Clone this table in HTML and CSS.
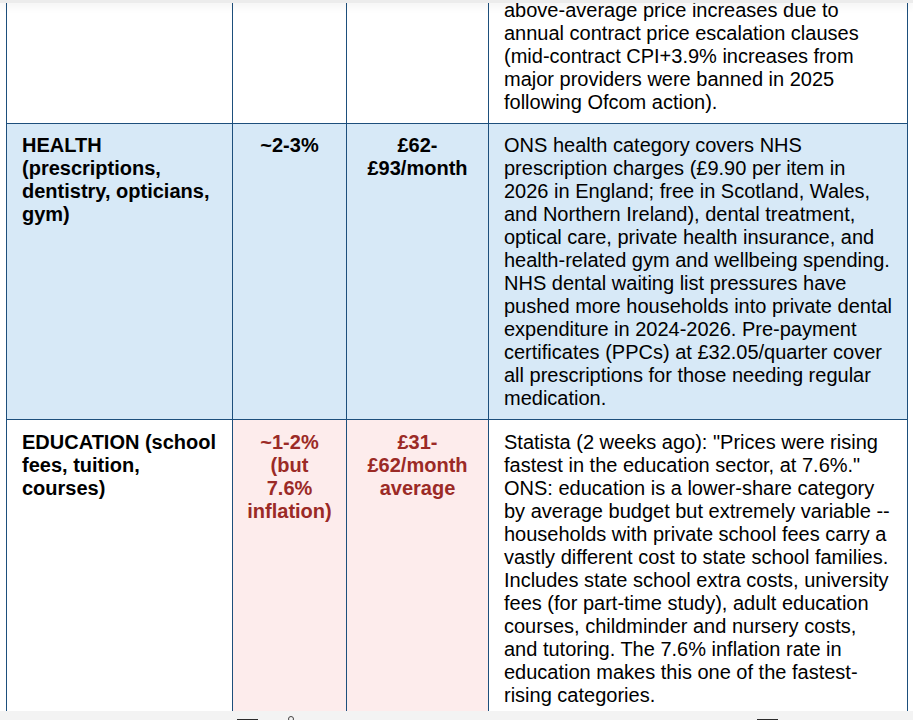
FILE: index.html
```html
<!DOCTYPE html>
<html lang="en">
<head>
<meta charset="utf-8">
<title>Household spending categories</title>
<link rel="stylesheet" href="styles.css">
</head>
<body>
<div class="topshade"></div>
<main class="doc">
  <table class="spend">
    <colgroup>
      <col class="c1"><col class="c2"><col class="c3"><col class="c4">
    </colgroup>
    <tbody>
      <tr class="row-first">
        <td class="cat"></td>
        <td class="num"></td>
        <td class="num"></td>
        <td class="desc">above-average price increases due to annual contract price escalation clauses (mid-contract CPI+3.9% increases from major providers were banned in 2025 following Ofcom action).</td>
      </tr>
      <tr class="row-blue">
        <td class="cat">HEALTH (prescriptions, dentistry, opticians, gym)</td>
        <td class="num">~2-3%</td>
        <td class="num">£62-<br>£93/month</td>
        <td class="desc">ONS health category covers NHS prescription charges (£9.90 per item in 2026 in England; free in Scotland, Wales, and Northern Ireland), dental treatment, optical care, private health insurance, and health-related gym and wellbeing spending. NHS dental waiting list pressures have pushed more households into private dental expenditure in 2024-2026. Pre-payment certificates (PPCs) at £32.05/quarter cover all prescriptions for those needing regular medication.</td>
      </tr>
      <tr class="row-last">
        <td class="cat">EDUCATION (school fees, tuition, courses)</td>
        <td class="num alert">~1-2%<br>(but<br>7.6%<br>inflation)</td>
        <td class="num alert">£31-<br>£62/month<br>average</td>
        <td class="desc">Statista (2 weeks ago): "Prices were rising fastest in the education sector, at 7.6%." ONS: education is a lower-share category by average budget but extremely variable -- households with private school fees carry a vastly different cost to state school families. Includes state school extra costs, university fees (for part-time study), adult education courses, childminder and nursery costs, and tutoring. The 7.6% inflation rate in education makes this one of the fastest-rising categories.</td>
      </tr>
    </tbody>
  </table>
</main>
<div class="toolbar">
  <span class="tb-icon tb-a"></span>
  <span class="tb-icon tb-b"></span>
  <span class="tb-icon tb-c"></span>
</div>
</body>
</html>
```
FILE: styles.css
```css
html, body {
  margin: 0;
  padding: 0;
  background: #ffffff;
}
body {
  height: 720px;
  overflow: hidden;
  font-family: "Liberation Sans", Arial, sans-serif;
  color: #000;
}
.doc {
  padding: 0 6px;
}
.spend {
  margin-top: -12px;
  width: 901px;
  table-layout: fixed;
  border-collapse: collapse;
  font-size: 20px;
  line-height: 23px;
}
.c1 { width: 226px; }
.c2 { width: 114px; }
.c3 { width: 142px; }
.c4 { width: 419px; }
.spend td {
  border: 1px solid #1d4f7c;
  vertical-align: top;
  padding: 10px 8px 9px 15px;
}
.spend .desc { padding-right: 13px; }
.row-blue td { background: #d7e9f7; }
.cat { font-weight: bold; }
.spend .num {
  font-weight: bold;
  text-align: center;
  padding-left: 4px;
  padding-right: 4px;
}
.spend .alert {
  background: #fdecec;
  color: #9b2a26;
}
.row-last td { padding-top: 11px; }
.topshade {
  position: fixed;
  top: 0;
  left: 0;
  right: 0;
  height: 3px;
  background: #ececec;
  box-shadow: 0 2px 8px rgba(0, 0, 0, 0.12);
  z-index: 2;
}
.toolbar {
  position: fixed;
  left: 0;
  right: 0;
  bottom: 0;
  height: 9px;
  background: #f3f3f3;
  z-index: 2;
}
.tb-icon {
  position: absolute;
  top: 8px;
  display: block;
}
.tb-a {
  left: 237px;
  width: 21px;
  height: 2px;
  background: #2b2b2b;
}
.tb-b {
  left: 288px;
  top: 5px;
  width: 6px;
  height: 6px;
  border: 1.5px solid #444;
  border-radius: 50%;
  box-sizing: border-box;
}
.tb-c {
  left: 757px;
  width: 21px;
  height: 2px;
  background: #2b2b2b;
}
```
